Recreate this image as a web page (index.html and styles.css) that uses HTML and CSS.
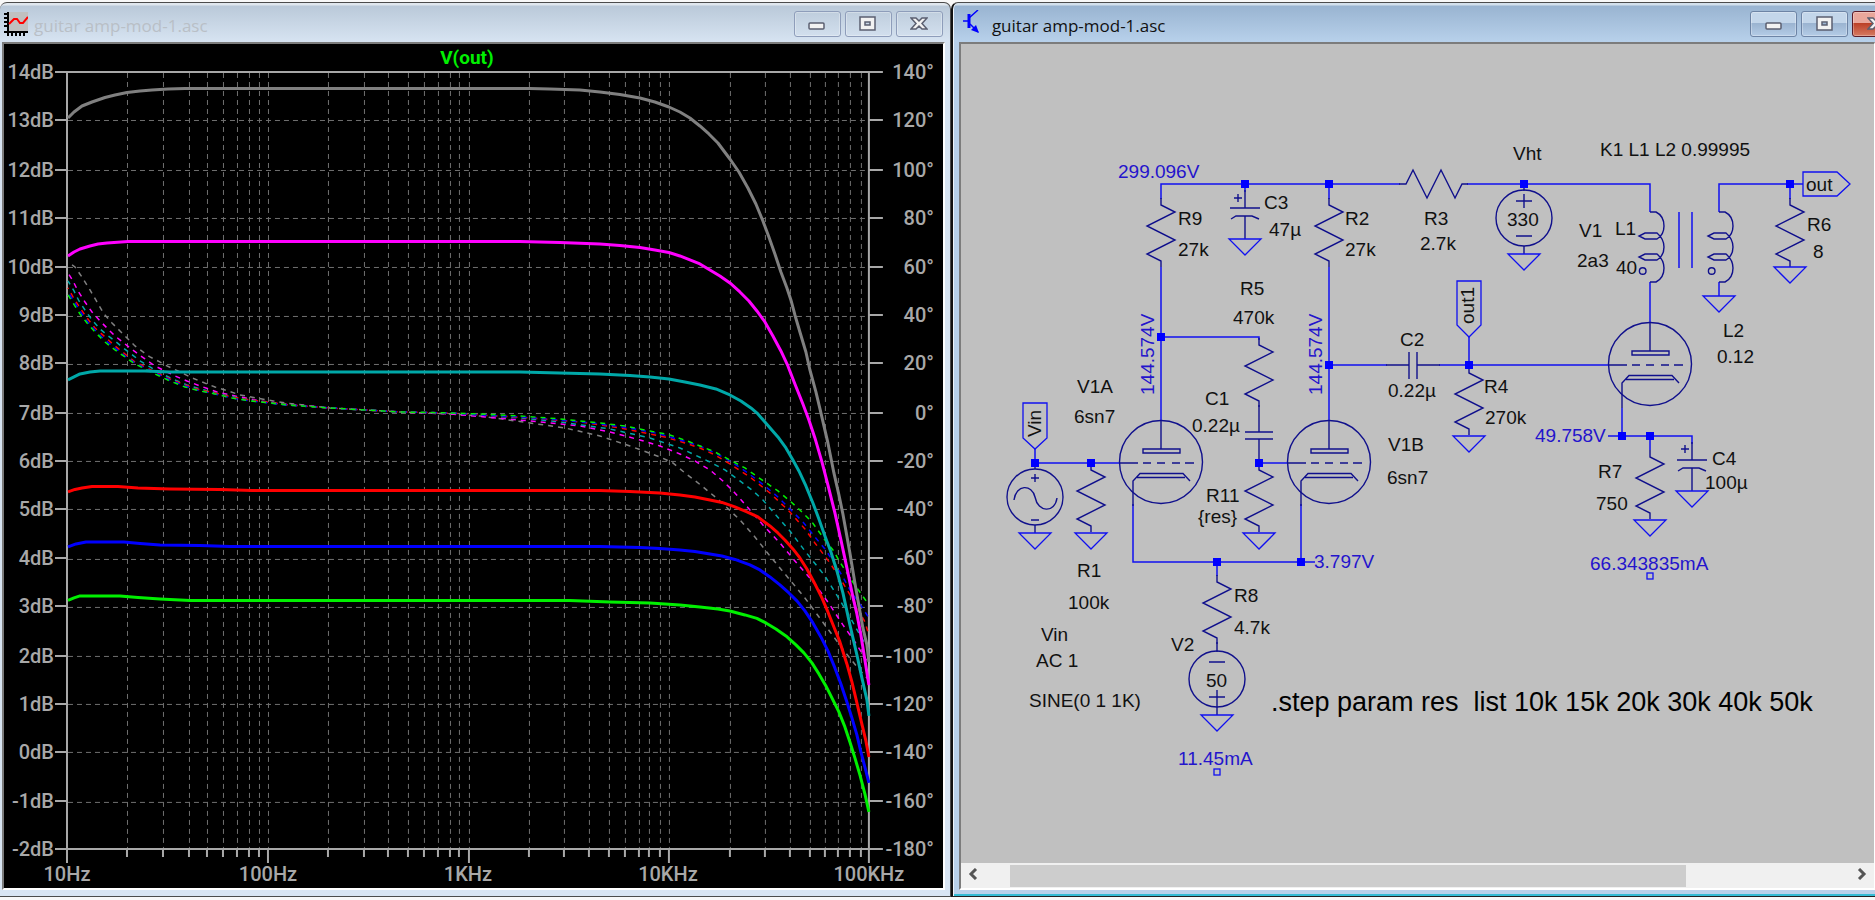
FILE: index.html
```html
<!DOCTYPE html>
<html lang="en">
<head>
    <meta charset="UTF-8">
    <meta name="viewport" content="width=device-width, initial-scale=1.0">
    <title>guitar amp-mod-1.asc</title>
    <link rel="stylesheet" href="styles.css">
</head>
<body>
    <!-- Plot window -->
    <section class="window plot-window">
        <header class="titlebar">
            <svg class="app-icon" viewBox="0 0 24 24" aria-hidden="true">
                <rect x="5" y="0" width="19" height="20" fill="#c0c0c0"/>
                <path d="M4 0V24M0 20H24M0 2H4M0 6H4M0 10H4M0 14H4M8 20V24M12 20V24M16 20V24M20 20V24" stroke="#000" stroke-width="2" fill="none"/>
                <path d="M5 12L10 7H13L16 11H19L24 5" stroke="#f00" stroke-width="2" fill="none"/>
            </svg>
            <h1 class="title">guitar amp-mod-1.asc</h1>
            <div class="controls">
                <button class="control" aria-label="Minimize"><svg viewBox="0 0 18 16"><rect class="glyph" x="1" y="7" width="15" height="6" rx="1"/></svg></button>
                <button class="control" aria-label="Maximize"><svg viewBox="0 0 18 16"><path class="glyph" fill-rule="evenodd" d="M1 1H16V14H1ZM6 6V9H11V6Z"/></svg></button>
                <button class="control" aria-label="Close"><svg viewBox="0 0 18 16"><path class="glyph" d="M1 2H6L9 5L12 2H17L12 7.500L17 13H12L9 10L6 13H1L6 7.500Z"/></svg></button>
            </div>
        </header>
        <main class="client">
            <svg class="plot" viewBox="4 44 939 844" preserveAspectRatio="xMinYMin meet">
                <!-- Grid -->
                <path class="grid" d="M68 120.500H869M68 170.500H869M68 218.500H869M68 267.500H869M68 316.500H869M68 364.500H869M68 413.500H869M68 461.500H869M68 509.500H869M68 559.500H869M68 607.500H869M68 656.500H869M68 704.500H869M68 752.500H869M68 802.500H869"/>
                <path class="grid" d="M127.500 73V849M163.500 73V849M189.500 73V849M207.500 73V849M223.500 73V849M237.500 73V849M249.500 73V849M259.500 73V849M268.500 73V849M328.500 73V849M364.500 73V849M388.500 73V849M408.500 73V849M424.500 73V849M438.500 73V849M450.500 73V849M459.500 73V849M469.500 73V849M529.500 73V849M564.500 73V849M589.500 73V849M609.500 73V849M625.500 73V849M639.500 73V849M649.500 73V849M660.500 73V849M669.500 73V849M730.500 73V849M765.500 73V849M790.500 73V849M810.500 73V849M825.500 73V849M838.500 73V849M850.500 73V849M861.500 73V849"/>

                <!-- Axes and ticks -->
                <path class="axis" d="M55 72H883M67 72V863M869 72V863M55 849H883"/>
                <path class="axis" d="M55 120H67M55 170H67M55 218H67M55 267H67M55 315H67M55 363H67M55 413H67M55 461H67M55 509H67M55 558H67M55 606H67M55 656H67M55 704H67M55 752H67M55 801H67"/>
                <path class="axis" d="M869 120H883M869 170H883M869 218H883M869 267H883M869 315H883M869 363H883M869 413H883M869 461H883M869 509H883M869 558H883M869 606H883M869 656H883M869 704H883M869 752H883M869 801H883"/>
                <path class="axis" d="M127 849V857M163 849V857M189 849V857M207 849V857M223 849V857M237 849V857M249 849V857M259 849V857M268 849V863M328 849V857M364 849V857M388 849V857M408 849V857M424 849V857M438 849V857M450 849V857M459 849V857M469 849V863M529 849V857M564 849V857M589 849V857M609 849V857M625 849V857M639 849V857M649 849V857M660 849V857M669 849V863M730 849V857M765 849V857M790 849V857M810 849V857M825 849V857M838 849V857M850 849V857M861 849V857"/>

                <!-- Phase traces -->
                <polyline class="phase c6" points="68,262 75,267 82,277 90,290 97,302 104,314 112,323 120,331 128,339 135,346 143,352 150,357 158,361 165,365 178,371 190,377 202,382 215,387 228,391 240,395 262,399 285,403 330,408 400,412 450,414 480,416 530,423 565,428 600,436 630,446 660,457 673,463 685,473 702,486 720,501 740,520 755,537 770,556 790,580 805,598 825,625 845,652 858,668 869,680"/>
                <polyline class="phase c5" points="68,273 73,281 78,291 85,302 92,312 100,321 108,329 115,336 125,344 134,351 145,359 155,366 165,371 175,376 187,381 200,386 217,392 235,396 260,401 285,404 330,408 400,412 450,414 485,417 530,421 580,426 610,432 640,440 660,446 680,454 695,461 710,470 723,481 735,493 750,510 763,525 780,543 795,561 815,584 830,605 843,625 855,642 869,664"/>
                <polyline class="phase c4" points="68,281 74,291 79,301 85,310 92,320 100,329 107,335 115,341 122,347 130,353 140,361 150,367 162,374 175,380 187,385 200,389 220,394 240,398 262,402 285,405 330,408 400,412 450,413 480,415 520,418 560,422 610,429 650,438 680,448 710,462 725,470 740,481 752,490 763,500 775,514 790,531 805,551 825,576 838,597 850,617 860,635 869,650"/>
                <polyline class="phase c3" points="68,288 73,297 80,308 87,318 95,328 105,337 115,346 125,354 135,362 145,367 155,372 170,379 185,385 200,390 215,393 232,397 250,400 290,405 330,408 400,412 450,413 480,415 530,418 580,422 620,428 665,437 685,443 700,448 715,455 730,464 750,477 770,493 790,512 805,529 815,543 830,563 843,583 855,603 865,622 869,635"/>
                <polyline class="phase c2" points="68,292 73,300 80,311 87,321 95,330 105,340 115,348 125,356 135,363 145,368 155,373 170,380 185,386 200,391 215,394 232,398 250,401 290,405 330,408 400,412 450,413 480,415 520,417 560,420 600,424 635,429 660,434 680,440 700,446 715,453 730,461 748,473 765,486 778,497 790,509 803,522 815,537 825,549 835,564 843,577 850,590 862,607 869,618"/>
                <polyline class="phase c1" points="68,295 73,303 80,314 87,323 95,332 105,342 115,350 125,357 135,364 145,369 155,374 170,381 185,387 200,391 215,394 232,398 250,401 290,405 330,408 400,412 450,413 480,414 520,416 560,419 600,423 625,426 650,431 670,435 690,442 715,452 730,460 745,468 765,482 778,491 790,501 801,511 812,522 825,540 833,550 840,562 850,578 862,595 869,605"/>

                <!-- Magnitude traces -->
                <polyline class="trace c6" points="68,118 74,112 82,106 92,102 105,97.500 115,95 127,92.500 140,91 152,90 168,89 185,88.500 530,88.500 550,89 580,90 600,92 620,94.500 640,98 655,102 669,107 680,112 690,118 700,126 709,134 718,143 730,159 739,172 748,188 756,204 763,221 769,237 775,254 781,272 787,288 791,300 795,315 800,332 806,352 810,370 816,392 821,413 828,443 834,473 839,495 843,514 850,553 855,583 858,600 863,628 867,645 869,662"/>
                <polyline class="trace c5" points="68,256 74,252 80,249 90,246 98,244 107,243 128,241.500 520,241.500 560,242.500 600,244 620,245.500 640,247.500 655,250 669,252.500 680,256 690,260 700,264 710,270 720,276 730,283 740,292 749,301 757,311 765,322 773,336 781,351 788,366 795,384 803,404 809,420 815,438 822,462 828,485 835,513 841,540 847,568 853,597 857,614 861,635 865,660 869,685"/>
                <polyline class="trace c4" points="68,380 74,377 80,374 90,372 100,371 145,371 170,372 520,372 560,373 600,374 630,375.500 650,377 669,379 685,382 700,385 716,389 730,395 741,401 751,408 758,414 765,422 778,437 786,448 793,460 799,471 806,486 813,503 819,519 825,536 831,552 837,571 843,593 850,625 857,655 862,678 867,700 869,716"/>
                <polyline class="trace c3" points="68,492 75,489.500 82,488 92,486.500 118,486.500 138,488 170,489 220,489.500 252,490.500 600,490.500 630,491.500 660,493 680,495 695,497 710,500 722,502.500 735,507 747,512 758,517 770,526 778,533 785,540 793,549 800,558 807,569 814,582 822,598 828,612 834,627 840,642 847,664 852,682 857,703 861,720 866,741 869,757"/>
                <polyline class="trace c2" points="68,547 76,544 86,542 124,542 140,543.500 160,545 200,545.500 230,546.500 600,546.500 640,547.500 660,548.500 680,550 695,551.500 710,554 722,556 735,559.500 750,565 760,570 770,577 780,585 789,593 797,601 805,611 813,623 821,637 828,651 835,668 841,684 847,702 852,718 857,735 861,752 866,771 869,783"/>
                <polyline class="trace c1" points="68,600.500 74,598 80,596 120,596 138,597.500 160,599 190,600.500 570,600.500 610,602 650,603 680,605 700,607 718,609 730,611 745,615 757,618.500 766,623 776,629 786,636 796,645 804,653 812,663 819,674 826,686 833,700 839,712 845,727 850,742 855,758 860,775 865,794 869,812"/>

                <text class="plot-title" x="467" y="64">V(out)</text>

                <g class="axis-text end">
                    <text x="54" y="79">14dB</text>
                    <text x="54" y="127">13dB</text>
                    <text x="54" y="177">12dB</text>
                    <text x="54" y="225">11dB</text>
                    <text x="54" y="274">10dB</text>
                    <text x="54" y="322">9dB</text>
                    <text x="54" y="370">8dB</text>
                    <text x="54" y="420">7dB</text>
                    <text x="54" y="468">6dB</text>
                    <text x="54" y="516">5dB</text>
                    <text x="54" y="565">4dB</text>
                    <text x="54" y="613">3dB</text>
                    <text x="54" y="663">2dB</text>
                    <text x="54" y="711">1dB</text>
                    <text x="54" y="759">0dB</text>
                    <text x="54" y="808">-1dB</text>
                    <text x="54" y="856">-2dB</text>
                </g>
                <g class="axis-text end">
                    <text x="934" y="79">140°</text>
                    <text x="934" y="127">120°</text>
                    <text x="934" y="177">100°</text>
                    <text x="934" y="225">80°</text>
                    <text x="934" y="274">60°</text>
                    <text x="934" y="322">40°</text>
                    <text x="934" y="370">20°</text>
                    <text x="934" y="420">0°</text>
                    <text x="934" y="468">-20°</text>
                    <text x="934" y="516">-40°</text>
                    <text x="934" y="565">-60°</text>
                    <text x="934" y="613">-80°</text>
                    <text x="934" y="663">-100°</text>
                    <text x="934" y="711">-120°</text>
                    <text x="934" y="759">-140°</text>
                    <text x="934" y="808">-160°</text>
                    <text x="934" y="856">-180°</text>
                </g>
                <g class="axis-text middle">
                    <text x="67" y="881">10Hz</text>
                    <text x="268" y="881">100Hz</text>
                    <text x="468" y="881">1KHz</text>
                    <text x="668" y="881">10KHz</text>
                    <text x="869" y="881">100KHz</text>
                </g>
            </svg>
        </main>
    </section>

    <!-- Schematic window -->
    <section class="window schematic-window">
        <header class="titlebar">
            <svg class="app-icon" viewBox="0 0 24 24" aria-hidden="true">
                <path d="M0 11H6M6 8L15 0M7 14L15 22" stroke="#00f" stroke-width="1.500" fill="none"/>
                <path d="M6 4V18" stroke="#00f" stroke-width="3"/>
                <path d="M16 23L8 20L13 15Z" fill="#00f"/>
            </svg>
            <h2 class="title">guitar amp-mod-1.asc</h2>
            <div class="controls">
                <button class="control" aria-label="Minimize"><svg viewBox="0 0 18 16"><rect class="glyph" x="1" y="7" width="15" height="6" rx="1"/></svg></button>
                <button class="control" aria-label="Maximize"><svg viewBox="0 0 18 16"><path class="glyph" fill-rule="evenodd" d="M1 1H16V14H1ZM6 6V9H11V6Z"/></svg></button>
                <button class="control close" aria-label="Close"><svg viewBox="0 0 18 16"><path class="glyph" d="M1 2H6L9 5L12 2H17L12 7.500L17 13H12L9 10L6 13H1L6 7.500Z"/></svg></button>
            </div>
        </header>
        <main class="client">
            <svg class="schematic" viewBox="961 44 913 819" preserveAspectRatio="xMinYMin meet">
                <defs>
                    <path id="res" d="M0 -7V0L14 7L-14 21L14 35L-14 49L0 56V62"/>
                    <path id="gnd" d="M-16 0H16L0 16Z"/>
                    <path id="coil" d="M0 0H6Q14 4 14 14Q14 23 7 27H-5L-11 24L-5 21H7Q14 27 14 35Q14 44 7 48H-5L-11 45L-5 42H7Q14 48 14 56Q14 66 6 70H0M-4 59A3.300 3.300 0 1 1 -10.600 59A3.300 3.300 0 1 1 -4 59"/>
                    <path id="plus" d="M-4 0H4M0 -4V4"/>
                    <path id="polcap" d="M-15 0H15M-14 11L-9 8H7L14 11M0 8V31"/>
                    <rect id="node" x="-4" y="-4" width="8" height="8"/>
                    <g id="tube">
                        <circle r="41.500"/>
                        <path d="M0 -42V-13M-18 -13H19V-9H-18ZM-42 1H-23M-18 1H-10M-4 1H4M11 1H19M24 1H33M-28 44V19L-21 11.500H22L29 19M-24 15.500H24"/>
                    </g>
                </defs>

                <!-- Wires -->
                <path class="wire" d="M1161 199V184H1400M1467 184H1650V212M1719 212V184H1803M1790 184V199M1245 184V192M1329 184V199"/>
                <path class="wire" d="M1161 267V421M1161 337H1259V340M1329 267V421M1329 365H1387M1439 365H1608M1469 337V367M1259 463H1287"/>
                <path class="wire" d="M1035 449V463H1119M1133 504V562H1315M1301 504V562M1217 562V576M1650 282V323M1719 282V296"/>
                <path class="wire" d="M1622 408V436M1608 436H1692V444M1650 436V450M1679 212V268M1692 212V268"/>

                <!-- Components -->
                <g class="part">
                    <use href="#res" x="1161" y="205"/>
                    <use href="#res" x="1329" y="205"/>
                    <use href="#res" x="1790" y="205"/>
                    <use href="#res" x="1259" y="345"/>
                    <use href="#res" x="1091" y="470"/>
                    <use href="#res" x="1259" y="470"/>
                    <use href="#res" x="1217" y="582"/>
                    <use href="#res" x="1469" y="373"/>
                    <use href="#res" x="1650" y="457"/>
                    <use href="#res" transform="translate(1406 184) rotate(-90)"/>
                    <use href="#coil" x="1650" y="212"/>
                    <use href="#coil" x="1719" y="212"/>
                    <use href="#tube" x="1161" y="462"/>
                    <use href="#tube" x="1329" y="462"/>
                    <use href="#tube" x="1650" y="364"/>
                    <use href="#polcap" x="1245" y="208"/>
                    <use href="#polcap" x="1692" y="460"/>
                    <use href="#plus" x="1238" y="198"/>
                    <use href="#plus" x="1685" y="449"/>
                    <use href="#plus" x="1035" y="478"/>
                    <path d="M1245 190V208M1692 442V460"/>
                    <path d="M1259 405V432M1245 432H1273M1245 439H1273M1259 439V464"/>
                    <path d="M1386 365H1409M1409 352V379M1417 352V379M1417 365H1440"/>
                    <circle cx="1524" cy="218" r="28"/>
                    <path d="M1524 184V191M1516 201H1532M1524 194V208M1516 236H1532M1524 246V254"/>
                    <circle cx="1035" cy="497" r="28"/>
                    <path d="M1035 463V469M1031 520H1039M1035 525V533M1014 500C1016 484 1032 484 1035 497C1038 513 1055 513 1057 498"/>
                    <circle cx="1217" cy="679" r="28"/>
                    <path d="M1217 642V652M1209 662H1225M1209 697H1225M1217 690V715"/>
                </g>

                <!-- Grounds and net flags -->
                <g class="wire thin">
                    <use href="#gnd" x="1245" y="239"/>
                    <use href="#gnd" x="1524" y="254"/>
                    <use href="#gnd" x="1719" y="296"/>
                    <use href="#gnd" x="1790" y="267"/>
                    <use href="#gnd" x="1035" y="533"/>
                    <use href="#gnd" x="1091" y="533"/>
                    <use href="#gnd" x="1259" y="533"/>
                    <use href="#gnd" x="1469" y="436"/>
                    <use href="#gnd" x="1650" y="520"/>
                    <use href="#gnd" x="1692" y="491"/>
                    <use href="#gnd" x="1217" y="715"/>
                    <path d="M1803 172H1837L1850 184L1837 196H1803Z"/>
                    <path d="M1457 281H1481V325L1469 337L1457 325Z"/>
                    <path d="M1023 403H1047V438L1035 449L1023 438Z"/>
                    <rect x="1647" y="573" width="6" height="6"/>
                    <rect x="1214" y="769" width="6" height="6"/>
                </g>

                <!-- Junctions -->
                <g class="node">
                    <use href="#node" x="1245" y="184"/>
                    <use href="#node" x="1329" y="184"/>
                    <use href="#node" x="1524" y="184"/>
                    <use href="#node" x="1790" y="184"/>
                    <use href="#node" x="1161" y="337"/>
                    <use href="#node" x="1329" y="365"/>
                    <use href="#node" x="1469" y="365"/>
                    <use href="#node" x="1035" y="463"/>
                    <use href="#node" x="1091" y="463"/>
                    <use href="#node" x="1259" y="463"/>
                    <use href="#node" x="1217" y="562"/>
                    <use href="#node" x="1301" y="562"/>
                    <use href="#node" x="1622" y="436"/>
                    <use href="#node" x="1650" y="436"/>
                </g>

                <!-- Names and values -->
                <g class="label">
                    <text x="1178" y="225">R9</text>
                    <text x="1178" y="256">27k</text>
                    <text x="1264" y="209">C3</text>
                    <text x="1269" y="236">47µ</text>
                    <text x="1345" y="225">R2</text>
                    <text x="1345" y="256">27k</text>
                    <text x="1240" y="295">R5</text>
                    <text x="1233" y="324">470k</text>
                    <text x="1077" y="393">V1A</text>
                    <text x="1074" y="423">6sn7</text>
                    <text x="1205" y="405">C1</text>
                    <text x="1192" y="432">0.22µ</text>
                    <text x="1400" y="346">C2</text>
                    <text x="1388" y="397">0.22µ</text>
                    <text x="1484" y="393">R4</text>
                    <text x="1485" y="424">270k</text>
                    <text x="1513" y="160">Vht</text>
                    <text x="1600" y="156">K1 L1 L2 0.99995</text>
                    <text x="1424" y="225">R3</text>
                    <text x="1420" y="250">2.7k</text>
                    <text x="1507" y="226">330</text>
                    <text x="1579" y="237">V1</text>
                    <text x="1577" y="267">2a3</text>
                    <text x="1615" y="235">L1</text>
                    <text x="1616" y="274">40</text>
                    <text x="1806" y="191">out</text>
                    <text x="1807" y="231">R6</text>
                    <text x="1813" y="258">8</text>
                    <text x="1723" y="337">L2</text>
                    <text x="1717" y="363">0.12</text>
                    <text x="1598" y="478">R7</text>
                    <text x="1596" y="510">750</text>
                    <text x="1712" y="465">C4</text>
                    <text x="1705" y="489">100µ</text>
                    <text x="1388" y="451">V1B</text>
                    <text x="1387" y="484">6sn7</text>
                    <text x="1206" y="502">R11</text>
                    <text x="1198" y="523">{res}</text>
                    <text x="1077" y="577">R1</text>
                    <text x="1068" y="609">100k</text>
                    <text x="1041" y="641">Vin</text>
                    <text x="1036" y="667">AC 1</text>
                    <text x="1029" y="707">SINE(0 1 1K)</text>
                    <text x="1234" y="602">R8</text>
                    <text x="1234" y="634">4.7k</text>
                    <text x="1171" y="651">V2</text>
                    <text x="1206" y="687">50</text>
                    <text transform="translate(1474 324) rotate(-90)">out1</text>
                    <text transform="translate(1041 437) rotate(-90)">Vin</text>
                </g>
                <g class="label reading">
                    <text x="1118" y="178">299.096V</text>
                    <text x="1314" y="568">3.797V</text>
                    <text x="1535" y="442">49.758V</text>
                    <text x="1590" y="570">66.343835mA</text>
                    <text x="1178" y="765">11.45mA</text>
                    <text transform="translate(1154 395) rotate(-90)">144.574V</text>
                    <text transform="translate(1322 395) rotate(-90)">144.574V</text>
                </g>
                <text class="directive" x="1271" y="711">.step param res&#160; list 10k 15k 20k 30k 40k 50k</text>
            </svg>
            <div class="scrollbar">
                <button class="scroll-arrow" aria-label="Scroll left"><svg viewBox="0 0 10 12"><path d="M8 1L3 6L8 11"/></svg></button>
                <div class="scroll-track"><div class="scroll-thumb"></div></div>
                <button class="scroll-arrow" aria-label="Scroll right"><svg viewBox="0 0 10 12"><path d="M2 1L7 6L2 11"/></svg></button>
            </div>
        </main>
    </section>
</body>
</html>
```

FILE: styles.css
```css
/* General */
* {
    box-sizing: border-box;
}

body {
    margin: 0;
    padding: 2px 0 3px;
    height: 100vh;
    display: flex;
    overflow: hidden;
    background-color: #f8f8f8;
    font-family: "Liberation Sans", Arial, sans-serif;
}

/* Windows */
.window {
    display: flex;
    flex-direction: column;
    min-width: 0;
    border: 1px solid #4c4c4c;
    border-radius: 7px 7px 0 0;
    overflow: hidden;
}

.plot-window {
    flex: 951 1 0;
    padding: 0 5px 6px 2px;
    border-left: none;
    background: linear-gradient(#e0e7ee 2px, #bac9d9 3px, #d6e3f1 38px, #d9e5f3);
}

.schematic-window {
    flex: 924 1 0;
    padding: 0 0 6px 6px;
    border-left: 2px solid #111;
    border-right: none;
    border-top-right-radius: 0;
    border-bottom-color: #222;
    background: linear-gradient(#d3e0ec 2px, #99b4d1 3px, #b7d0ea 38px, #b9d1ea);
    box-shadow: inset 1px 0 #eef4fa, inset 0 -2px #35bcd4;
}

/* Title bar */
.titlebar {
    flex: none;
    height: 39px;
    display: flex;
    align-items: center;
    padding-bottom: 2px;
}

.app-icon {
    width: 24px;
    height: 24px;
    margin: 4px 6px 0 2px;
}

.title {
    flex: 1;
    margin: 8px 0 0;
    font-family: "Open Sans", sans-serif;
    font-size: 17px;
    font-weight: 400;
    line-height: 24px;
    color: #b9bfc6;
}

.schematic-window .title {
    color: #111;
}

.schematic-window .app-icon {
    margin: 0 5px 0 4px;
}

.controls {
    display: flex;
    gap: 4px;
    margin-top: 5px;
}

.plot-window .controls {
    margin-right: 2px;
}

/* the close button runs past the right edge */
.schematic-window .controls {
    margin-right: -24px;
}

.control {
    width: 47px;
    height: 26px;
    padding: 0;
    display: flex;
    align-items: center;
    justify-content: center;
    border: 1px solid #8e9dba;
    border-radius: 3px;
    background: none;
    box-shadow: inset 0 0 0 1px rgba(255, 255, 255, 0.3);
}

.control svg {
    width: 18px;
    height: 16px;
}

.schematic-window .control {
    border-color: #6d84a5;
    background: linear-gradient(#c3d6ea 45%, #9ab3d0 46%, #b4cce6);
}

.schematic-window .close {
    border-color: #5a1c28;
    background: linear-gradient(#e9a79b 45%, #bb3f25 46%, #d67a62);
}

.glyph {
    fill: #f2f2f2;
    stroke: #5b5f70;
    stroke-width: 1.5;
}

/* Client area */
.client {
    flex: 1;
    min-height: 0;
    display: flex;
    flex-direction: column;
    border: 2px solid #fff;
    border-top-color: #7c7c7c;
    border-left-color: #7c7c7c;
}

.plot-window .client {
    background-color: #000;
}

.schematic-window .client {
    border-right-width: 1px;
    background-color: #c0c0c0;
}

.plot,
.schematic {
    flex: 1;
    width: 100%;
    min-height: 0;
    display: block;
}

/* Plot */
.grid {
    fill: none;
    stroke: #707070;
    stroke-width: 1;
    stroke-dasharray: 5 4;
}

.axis {
    fill: none;
    stroke: #a8a8a8;
    stroke-width: 2;
}

.trace {
    fill: none;
    stroke-width: 3;
    stroke-linejoin: round;
}

.phase {
    fill: none;
    stroke-width: 1.5;
    stroke-dasharray: 5 5;
}

.c1 { stroke: #00f000; stroke-dashoffset: 0; }
.c2 { stroke: #0000ff; stroke-dashoffset: 7; }
.c3 { stroke: #ff0000; stroke-dashoffset: 4; }
.c4 { stroke: #00a8a8; stroke-dashoffset: 1; }
.c5 { stroke: #ff00ff; stroke-dashoffset: 8; }
.c6 { stroke: #808080; stroke-dashoffset: 5; }

.axis-text,
.plot-title {
    font-family: Roboto, sans-serif;
    font-size: 20px;
    font-weight: 500;
    fill: #a8a8a8;
}

.plot-title {
    font-size: 19px;
    font-weight: 700;
    fill: #00f000;
    text-anchor: middle;
}

.end {
    text-anchor: end;
}

.middle {
    text-anchor: middle;
}

/* Schematic */
.wire {
    fill: none;
    stroke: #1010f0;
    stroke-width: 1.5;
}

.thin {
    stroke-width: 1.3;
}

.part {
    fill: none;
    stroke: #10108c;
    stroke-width: 1.4;
}

.node {
    fill: #0000ff;
}

.label {
    font-size: 19px;
    fill: #111;
}

.reading {
    fill: #2414cc;
}

.directive {
    font-size: 27px;
    fill: #000;
}

/* Scroll bar */
.scrollbar {
    flex: none;
    height: 25px;
    display: flex;
    background-color: #f0f0f0;
}

.scroll-arrow {
    width: 24px;
    padding: 0;
    border: none;
    background: none;
}

.scroll-arrow svg {
    width: 10px;
    height: 12px;
    fill: none;
    stroke: #555;
    stroke-width: 3;
}

.scroll-track {
    flex: 1;
    padding: 2px 0 1px;
}

.scroll-thumb {
    height: 100%;
    width: 78.2%;
    margin-left: 2.9%;
    background-color: #cdcdcd;
}
```
